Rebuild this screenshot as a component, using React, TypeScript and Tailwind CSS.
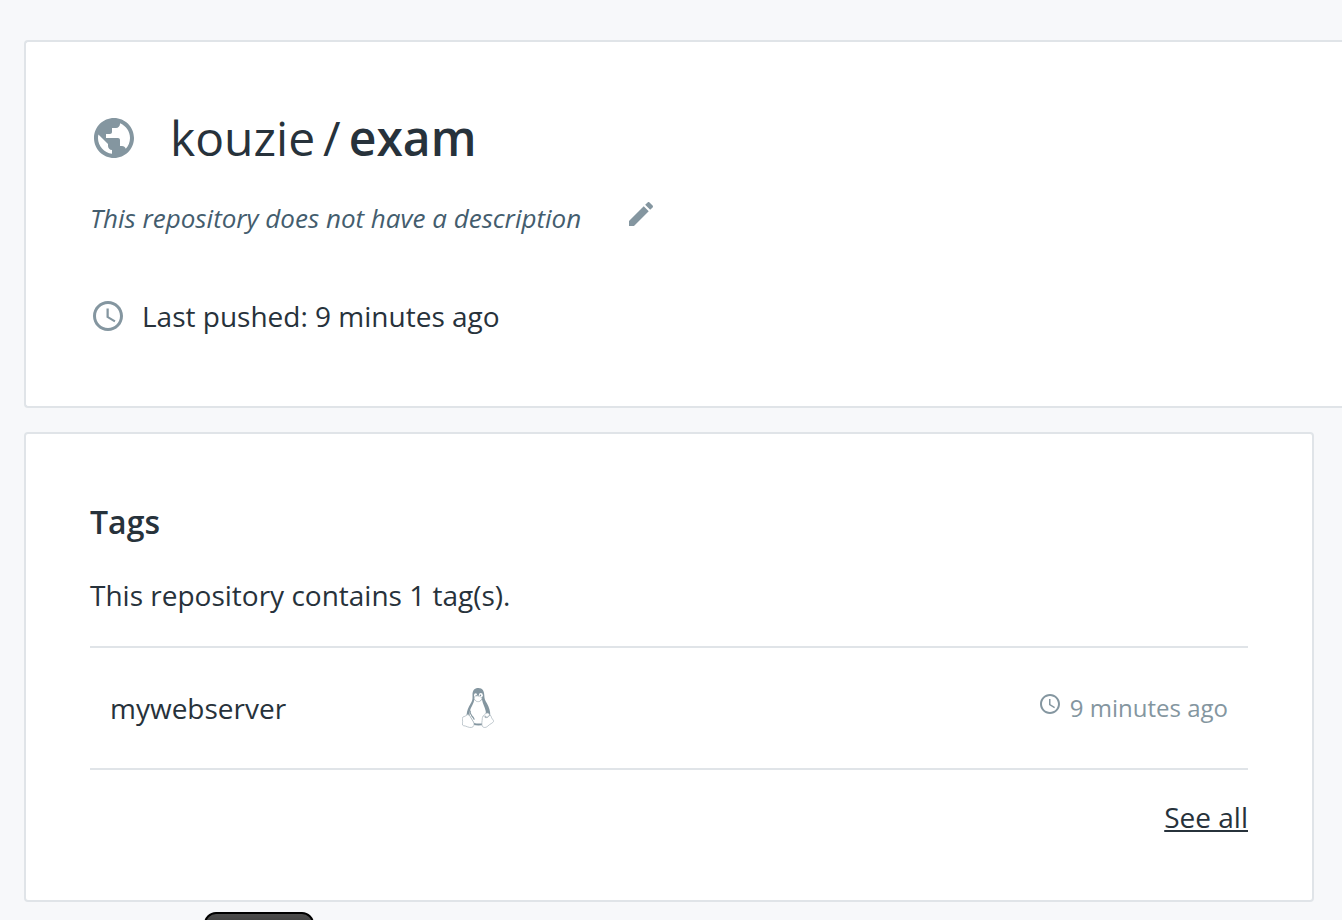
import type { ReactNode } from "react";

function Icon({ className, children }: { className: string; children: ReactNode }) {
  return (
    <svg viewBox="0 0 24 24" fill="currentColor" aria-hidden="true" className={className}>
      {children}
    </svg>
  );
}

function GlobeIcon({ className }: { className: string }) {
  return (
    <Icon className={className}>
      <path d="M12 2C6.48 2 2 6.48 2 12s4.48 10 10 10 10-4.48 10-10S17.52 2 12 2zm-1 17.93c-3.95-.49-7-3.85-7-7.93 0-.62.08-1.21.21-1.79L9 15v1c0 1.1.9 2 2 2v1.93zm6.9-2.54c-.26-.81-1-1.39-1.9-1.39h-1v-3c0-.55-.45-1-1-1H8v-2h2c.55 0 1-.45 1-1V7h2c1.1 0 2-.9 2-2v-.41c2.93 1.19 5 4.06 5 7.41 0 2.08-.8 3.97-2.1 5.39z" />
    </Icon>
  );
}

function ClockIcon({ className }: { className: string }) {
  return (
    <Icon className={className}>
      <path d="M11.99 2C6.47 2 2 6.48 2 12s4.47 10 9.99 10C17.52 22 22 17.52 22 12S17.52 2 11.99 2zM12 20c-4.42 0-8-3.58-8-8s3.58-8 8-8 8 3.58 8 8-3.58 8-8 8z" />
      <path d="M12.5 7H11v6l5.25 3.15.75-1.23-4.5-2.67z" />
    </Icon>
  );
}

function PencilIcon({ className }: { className: string }) {
  return (
    <Icon className={className}>
      <path d="M3 17.25V21h3.75L17.81 9.94l-3.75-3.75L3 17.25zM20.71 7.04c.39-.39.39-1.02 0-1.41l-2.34-2.34c-.39-.39-1.02-.39-1.41 0l-1.83 1.83 3.75 3.75 1.83-1.83z" />
    </Icon>
  );
}

function PenguinIcon({ className }: { className: string }) {
  return (
    <svg viewBox="0 0 32 40" role="img" aria-label="Linux" className={className}>
      <path
        fill="#8496a0"
        d="M16.500 0c-4.200 0-6 2.700-6 6.500 0 3 .3 5-1 7.500-1.500 3-4 6.500-4.500 10-.3 2-.3 3-.8 4.200l6.800 8.600c3.500 1 7.500 1 11 0l6.300-9.300c.1-4.500-1.300-8.500-3.300-12-1.700-2.700-2.700-4.500-2.700-8C22.300 3 20.500 0 16.500 0z"
      />
      <path
        fill="#fff"
        d="M12.500 11.500c2 3 5.500 3 7.500 0 .6 4 2.800 7.300 3.700 11.500.6 3-.2 5.500-1.200 7.500l-1 4.500c-2.800.8-6.500.8-9.300 0L8 28c-.5-1.500-.7-3-.3-4.500 1-4 3.800-7.500 4.800-12z"
      />
      <path d="M8.200 22.500c-.5 2.300 0 3.700 1.500 5.200 1.400 1.300 2.300 2.500 2.600 4" fill="none" stroke="#8496a0" strokeWidth="1.200" />
      <ellipse cx="13.600" cy="7.200" rx="1.600" ry="2" fill="#fff" />
      <ellipse cx="18.800" cy="7.200" rx="2" ry="2.200" fill="#fff" />
      <circle cx="14.200" cy="7.400" r=".7" fill="#8496a0" />
      <circle cx="18.400" cy="7.400" r=".8" fill="#8496a0" />
      <path
        d="M12 9.800c1.600-1.600 3-2 4-1.700 1.200.2 2.900.9 4.100 1.700-.2 2.200-2.700 4-4 4s-3.700-1.500-4.100-4z"
        fill="#fff"
        stroke="#aebac1"
        strokeWidth=".5"
      />
      <g fill="#fff" stroke="#a3b0b8" strokeWidth=".7" strokeLinejoin="round">
        <path d="M1 29c1.500-1 2.500-.2 3.200-1.700 1-1.200 2.700-.8 3.800.9l3.700 6.200c1 2 .2 4.500-2 5-3 .6-5-1.400-8.400-1.800C-.3 37.200.6 35 .6 33.500.5 31.500-.3 30 1 29z" />
        <path d="M22 27.500c0 1.500 1 2.300 2.500 2.100 1.500 0 2.500-1.500 3.500-2.600 1.300.8 1.200 2 1.700 3 .7 1.300 2 2.300 1.900 3.400-.6 1.700-4 2.700-5.600 4.500-1.500 1.700-4.500 2.300-5.700.3-1-2-.1-5.200 0-7.700.2-1.500.5-2.900 1.700-3z" />
        <path d="M23 27.500c-.8-1.300.3-2.500 1.500-2.300 1.300-.5 2.800.3 3 1.500-.6 1.500-1.500 2.300-2.700 2.300" />
      </g>
    </svg>
  );
}

export default function App() {
  return (
    <main className="h-screen overflow-hidden bg-[#f7f8fa] pt-10 pl-6 font-['Open_Sans',sans-serif] text-[28px] leading-10 text-[#27323b]">
      <section className="rounded-l border-2 border-r-0 border-[#e0e4e8] bg-white px-16 pt-16 pb-[70px]">
        <div className="flex items-center gap-8">
          <GlobeIcon className="size-12 shrink-0 text-[#8496a0]" />
          <h1 className="text-[48px] leading-16">
            kouzie<span className="mx-2">/</span>
            <span className="font-semibold">exam</span>
          </h1>
        </div>
        <div className="mt-7 flex items-start gap-11">
          <p className="text-[26px] leading-10 text-[#445d6e] italic">
            This repository does not have a description
          </p>
          <button type="button" aria-label="Edit description" className="text-[#8496a0]">
            <PencilIcon className="size-8" />
          </button>
        </div>
        <div className="mt-[58px] flex items-center gap-4">
          <ClockIcon className="size-9 shrink-0 text-[#8496a0]" />
          <p>Last pushed: 9 minutes ago</p>
        </div>
      </section>

      <section className="mt-6 mr-7 rounded border-2 border-[#e0e4e8] bg-white px-16 pt-16 pb-[63px]">
        <h2 className="text-[32px] leading-12 font-semibold">Tags</h2>
        <p className="mt-[29px]">This repository contains 1 tag(s).</p>
        <ul className="mt-[31px] border-y-2 border-[#e0e4e8]">
          <li className="flex h-30 items-center px-5">
            <span className="w-[352px]">mywebserver</span>
            <PenguinIcon className="h-10 w-8" />
            <span className="ml-auto flex items-start gap-2 text-[24px] leading-8 text-[#8496a0]">
              <ClockIcon className="size-6" />
              9 minutes ago
            </span>
          </li>
        </ul>
        <div className="mt-[27px] flex justify-end">
          <a href="#tags" className="underline">
            See all
          </a>
        </div>
      </section>

      <div className="mt-[10px] ml-[180px] h-12 w-[110px] rounded-xl border-2 border-black bg-linear-to-b from-[#4c4c4c] to-[#1a1a1a]" />
    </main>
  );
}
